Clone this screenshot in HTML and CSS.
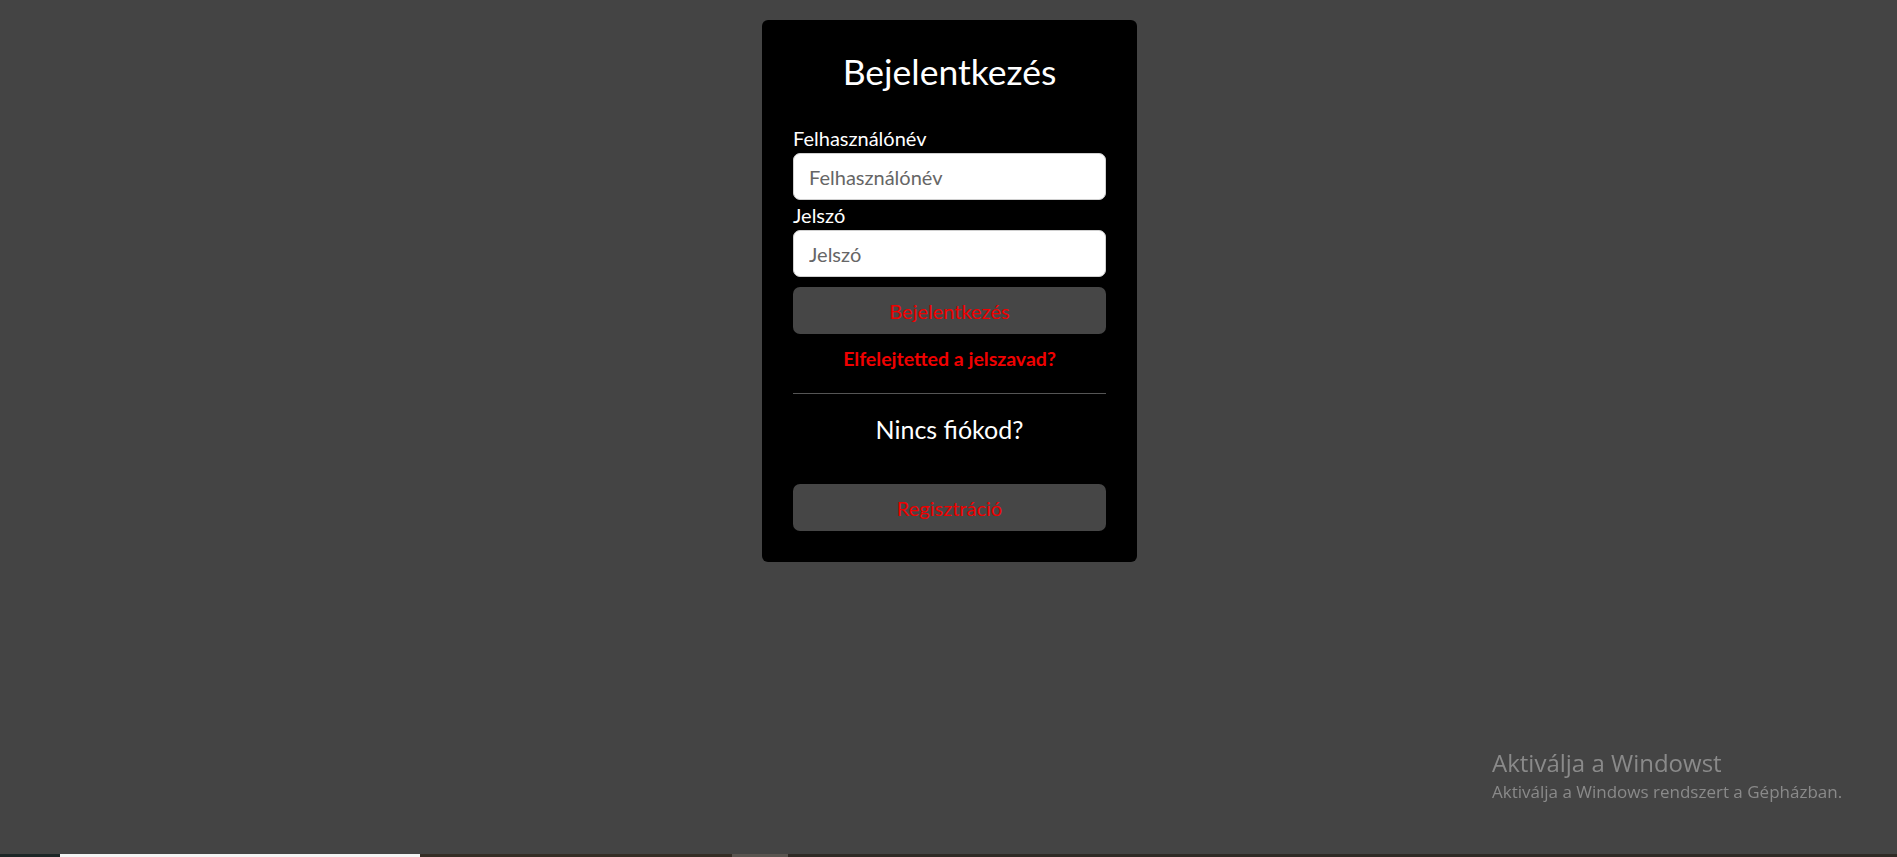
FILE: index.html
```html
<!DOCTYPE html>
<html lang="hu">
<head>
<meta charset="utf-8">
<title>Bejelentkezés</title>
<link rel="stylesheet" href="styles.css">
</head>
<body>
<main class="page">
  <form class="card">
    <h2 class="title">Bejelentkezés</h2>
    <label class="label" for="user">Felhasználónév</label>
    <input class="field" id="user" type="text" placeholder="Felhasználónév">
    <label class="label label-second" for="pass">Jelszó</label>
    <input class="field" id="pass" type="password" placeholder="Jelszó">
    <button class="btn btn-login" type="button">Bejelentkezés</button>
    <a class="forgot" href="#">Elfelejtetted a jelszavad?</a>
    <hr class="divider">
    <p class="noacc">Nincs fiókod?</p>
    <button class="btn btn-reg" type="button">Regisztráció</button>
  </form>
</main>
<div class="watermark">
  <div class="wm-title">Aktiválja a Windowst</div>
  <div class="wm-sub">Aktiválja a Windows rendszert a Gépházban.</div>
</div>
<div class="taskbar">
  <span class="tb tb-a"></span>
  <span class="tb tb-b"></span>
  <span class="tb tb-c"></span>
  <span class="tb tb-d"></span>
  <span class="tb tb-e"></span>
</div>
</body>
</html>
```
FILE: styles.css
```css
html, body {
  margin: 0;
  padding: 0;
  height: 100%;
}
body {
  background: #444444;
  font-family: Lato, "Open Sans", sans-serif;
  color: #ffffff;
  overflow: hidden;
}
.page {
  display: flex;
  justify-content: center;
  padding-top: 20px;
  padding-left: 2px;
}
.card {
  width: 375px;
  box-sizing: border-box;
  background: #000000;
  border-radius: 6px;
  padding: 32px 31px 31px;
  display: flex;
  flex-direction: column;
}
.title {
  margin: 0 0 35px;
  font-size: 35.5px;
  line-height: 40px;
  font-weight: 400;
  text-align: center;
}
.label {
  display: block;
  font-size: 20px;
  line-height: 22px;
  margin-bottom: 4px;
}
.label-second {
  margin-top: 4px;
}
.field {
  height: 47px;
  box-sizing: border-box;
  border: 1px solid #d0d0d0;
  border-radius: 7px;
  background: #ffffff;
  padding: 0 15px;
  font-family: Lato, "Open Sans", sans-serif;
  font-size: 20px;
  color: #333;
  outline: none;
}
.field::placeholder {
  color: #666666;
}
.btn {
  height: 47px;
  border: none;
  border-radius: 7px;
  background: #464646;
  color: #f00000;
  font-family: Lato, "Open Sans", sans-serif;
  font-size: 20px;
  cursor: pointer;
}
.btn-login {
  margin-top: 10px;
}
.forgot {
  margin-top: 14px;
  text-align: center;
  font-size: 19.5px;
  line-height: 22px;
  font-weight: 700;
  color: #f00000;
  text-decoration: none;
}
.divider {
  width: 100%;
  margin: 23px 0 0;
  border: none;
  border-top: 1px solid #555555;
}
.noacc {
  margin: 21px 0 0;
  text-align: center;
  font-size: 25px;
  line-height: 29px;
}
.btn-reg {
  margin-top: 40px;
}
.watermark {
  position: fixed;
  left: 1492px;
  top: 747px;
  color: #8a8a8a;
  font-family: "Open Sans", "Noto Sans", sans-serif;
}
.wm-title {
  font-size: 24px;
  line-height: 32px;
}
.wm-sub {
  font-size: 17px;
  line-height: 26px;
}
.taskbar {
  position: fixed;
  left: 0;
  right: 0;
  bottom: 0;
  height: 3px;
  display: flex;
  background: #2e2822;
}
.tb { display: block; height: 3px; }
.tb-a { width: 60px; background: #1c2626; }
.tb-b { width: 360px; background: #f4f4f4; }
.tb-c { width: 312px; background: #352d25; }
.tb-d { width: 56px; background: #5a5550; }
.tb-e { flex: 1; background: #2f2a25; }
```
